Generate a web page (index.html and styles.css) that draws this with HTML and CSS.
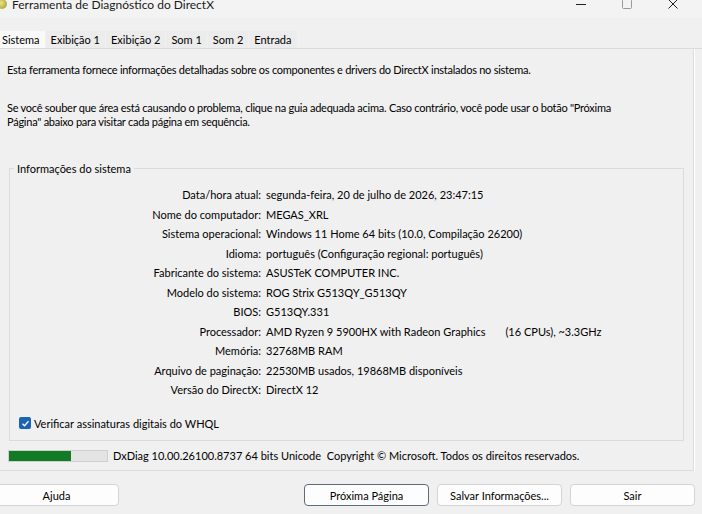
FILE: index.html
```html
<!DOCTYPE html>
<html lang="pt-BR">
<head>
    <meta charset="UTF-8">
    <meta name="viewport" content="width=device-width, initial-scale=1.0">
    <title>Ferramenta de Diagnóstico do DirectX</title>
    <link rel="stylesheet" href="styles.css">
</head>
<body>

    <div class="titlebar">
        <div class="app-title">
            <span class="app-icon"></span>
            <span>Ferramenta de Diagnóstico do DirectX</span>
        </div>
        <div class="win-controls">
            <span class="ctl">
                <svg width="10" height="10" viewBox="0 0 10 10"><path d="M0 5.5h10" stroke="#222" stroke-width="1"/></svg>
            </span>
            <span class="ctl">
                <svg width="10" height="10" viewBox="0 0 10 10"><rect x="0.5" y="0.5" width="9" height="9" rx="1" fill="none" stroke="#999" stroke-width="1"/></svg>
            </span>
            <span class="ctl">
                <svg width="10" height="10" viewBox="0 0 10 10"><path d="M0.5 0.5l9 9M9.5 0.5l-9 9" stroke="#222" stroke-width="1"/></svg>
            </span>
        </div>
    </div>

    <div class="tabs">
        <div class="tab active">Sistema</div>
        <div class="tab">Exibição 1</div>
        <div class="tab">Exibição 2</div>
        <div class="tab">Som 1</div>
        <div class="tab">Som 2</div>
        <div class="tab">Entrada</div>
    </div>

    <div class="page">
        <p class="intro">Esta ferramenta fornece informações detalhadas sobre os componentes e drivers do DirectX instalados no sistema.</p>
        <p class="intro second">Se você souber que área está causando o problema, clique na guia adequada acima. Caso contrário, você pode usar o botão "Próxima Página" abaixo para visitar cada página em sequência.</p>

        <fieldset class="group">
            <legend>Informações do sistema</legend>
            <div class="info">
                <span class="lbl">Data/hora atual:</span><span>segunda-feira, 20 de julho de 2026, 23:47:15</span>
                <span class="lbl">Nome do computador:</span><span>MEGAS_XRL</span>
                <span class="lbl">Sistema operacional:</span><span>Windows 11 Home 64 bits (10.0, Compilação 26200)</span>
                <span class="lbl">Idioma:</span><span>português (Configuração regional: português)</span>
                <span class="lbl">Fabricante do sistema:</span><span>ASUSTeK COMPUTER INC.</span>
                <span class="lbl">Modelo do sistema:</span><span>ROG Strix G513QY_G513QY</span>
                <span class="lbl">BIOS:</span><span>G513QY.331</span>
                <span class="lbl">Processador:</span><span>AMD Ryzen 9 5900HX with Radeon Graphics <span class="cpu">(16 CPUs), ~3.3GHz</span></span>
                <span class="lbl">Memória:</span><span>32768MB RAM</span>
                <span class="lbl">Arquivo de paginação:</span><span>22530MB usados, 19868MB disponíveis</span>
                <span class="lbl">Versão do DirectX:</span><span>DirectX 12</span>
            </div>
            <label class="check">
                <span class="box">
                    <svg width="9" height="9" viewBox="0 0 9 9"><path d="M1.5 4.8l2 2 4-4.6" fill="none" stroke="#fff" stroke-width="1.3"/></svg>
                </span>
                Verificar assinaturas digitais do WHQL
            </label>
        </fieldset>

        <div class="status">
            <div class="progress"><div class="fill" style="width: 63%"></div></div>
            <span>DxDiag 10.00.26100.8737 64 bits Unicode&nbsp; Copyright © Microsoft. Todos os direitos reservados.</span>
        </div>
    </div>

    <div class="buttons">
        <button class="btn">Ajuda</button>
        <span class="spacer"></span>
        <button class="btn default">Próxima Página</button>
        <button class="btn">Salvar Informações...</button>
        <button class="btn">Sair</button>
    </div>

</body>
</html>
```

FILE: styles.css
```css
body {
    margin: 0;
    width: 702px;
    height: 514px;
    overflow: hidden;
    background: #f0f0f0;
    font-family: Lato, "Open Sans", sans-serif;
    font-size: 11px;
    color: #000;
}
.titlebar {
    display: flex;
    justify-content: space-between;
    align-items: center;
    height: 28px;
    margin-top: -10px;
    background: #f3f3f3;
}
.app-title {
    display: flex;
    align-items: center;
    gap: 5px;
    margin-left: -3px;
    font-size: 12px;
    color: #1a1a1a;
}
.app-icon {
    width: 10px;
    height: 10px;
    border-radius: 50%;
    background: radial-gradient(circle at 40% 40%, #f3e27a, #8a9a3a);
}
.win-controls {
    display: flex;
    margin-right: 6px;
}
.ctl {
    display: flex;
    justify-content: center;
    width: 46px;
}
.tabs {
    display: flex;
    height: 17px;
    margin-top: 13px;
    border-bottom: 1px solid #dcdcdc;
}
.tab {
    padding: 0 5px;
    margin-right: 1px;
    line-height: 17px;
    background: #ececec;
    white-space: nowrap;
}
.tab.active {
    background: #f9f9f9;
    padding: 0 5px 0 2px;
}
.page {
    width: 694px;
    height: 422px;
    border-right: 1px solid #dcdcdc;
    border-bottom: 1px solid #dcdcdc;
    box-shadow: 1px 0 0 #fff;
    box-sizing: border-box;
    padding-left: 7px;
}
.intro {
    margin: 0;
    line-height: 15px;
    letter-spacing: -0.25px;
}
.intro:first-child {
    padding-top: 13px;
}
.second {
    margin-top: 24px;
    padding-right: 70px;
    line-height: 14px;
}
.group {
    margin: 33px 0 0 2px;
    width: 675px;
    height: 279px;
    box-sizing: border-box;
    border: 1px solid #dcdcdc;
    padding: 0;
}
.group legend {
    margin-left: 4px;
    padding: 0 3px;
    line-height: 13px;
}
.info {
    display: grid;
    grid-template-columns: 251px auto;
    column-gap: 5px;
    margin-top: 10px;
    line-height: 19.5px;
}
.lbl {
    text-align: right;
}
.cpu {
    margin-left: 17px;
}
.check {
    display: flex;
    align-items: center;
    gap: 3px;
    margin: 17px 0 0 9px;
}
.box {
    display: flex;
    align-items: center;
    justify-content: center;
    width: 12px;
    height: 12px;
    border-radius: 2px;
    background: #1a64b4;
}
.status {
    display: flex;
    align-items: center;
    gap: 5px;
    margin-top: 8px;
    margin-left: 1px;
}
.progress {
    width: 100px;
    height: 12px;
    background: #e4e4e4;
    border: 1px solid #cfcfcf;
    box-sizing: border-box;
}
.fill {
    height: 100%;
    background: #137a25;
}
.buttons {
    display: flex;
    gap: 8px;
    margin: 13px 0 0 -6px;
    padding-right: 7px;
}
.spacer {
    flex: 1;
}
.btn {
    width: 125px;
    height: 22px;
    margin: 0;
    padding: 0;
    font-family: inherit;
    font-size: 11px;
    color: #000;
    background: #fdfdfd;
    border: 1px solid #d4d4d4;
    border-radius: 4px;
}
.btn.default {
    border-color: #5d6b7a;
}
```
